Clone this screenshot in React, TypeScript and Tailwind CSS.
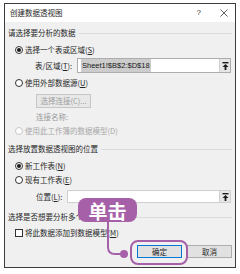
import React from 'react';

const cjk = { fontFamily: '"Noto Sans CJK SC", "Liberation Sans", sans-serif' };

function Radio({ checked = false, disabled = false }: { checked?: boolean; disabled?: boolean }) {
  return (
    <span
      className={`flex items-center justify-center w-[8px] h-[8px] rounded-full border bg-white ${
        disabled ? 'border-[#c8c8c8]' : 'border-[#333333]'
      }`}
    >
      {checked && <span className="w-[4px] h-[4px] rounded-full bg-[#1a1a1a]" />}
    </span>
  );
}

function Heading({ text }: { text: string }) {
  return (
    <div className="flex items-center h-[22px] shrink-0">
      <span className="text-[#262626] whitespace-nowrap">{text}</span>
      <span className="flex-1 h-px bg-[#dcdcdc] ml-[3px]" />
    </div>
  );
}

function UploadIcon() {
  return (
    <svg width="7" height="8" viewBox="0 0 7 8">
      <rect x="0.5" y="0" width="6" height="1.4" fill="#1a1a1a" />
      <path d="M3.5 2 L6.5 5 H4.4 V8 H2.6 V5 H0.5 Z" fill="#1a1a1a" />
    </svg>
  );
}

export default function App() {
  return (
    <div className="relative w-[240px] h-[274px] bg-white overflow-hidden pt-[3px] pl-[4px] text-[7.5px] leading-none text-[#262626]" style={cjk}>
      {/* dialog */}
      <div className="w-[232px] h-[265px] border border-[#3c3c3c] flex flex-col">
        <div className="h-[18px] bg-white flex items-center pl-[5px] pr-[7px] shrink-0">
          <span>创建数据透视图</span>
          <span className="ml-auto text-[#333] text-[8px]" style={{ fontFamily: '"Liberation Sans", sans-serif' }}>?</span>
          <svg className="ml-[19px]" width="8" height="8" viewBox="0 0 8 8">
            <path d="M0.5 0.5 L7.5 7.5 M7.5 0.5 L0.5 7.5" stroke="#333" strokeWidth="0.8" />
          </svg>
        </div>

        <div className="flex-1 bg-[#f0f0f0] flex flex-col pl-[3px] pr-[3px]">
          <Heading text="请选择要分析的数据" />

          <div className="flex items-center gap-[2px] h-[12px] pl-[7px] shrink-0">
            <Radio checked />
            <span>选择一个表或区域(<u>S</u>)</span>
          </div>

          <div className="flex items-center h-[19px] pl-[27px] shrink-0">
            <span className="w-[42px] whitespace-nowrap">表/区域(<u>T</u>):</span>
            <div className="w-[154px] h-[15px] bg-white border border-[#adadad] flex items-center">
              <span className="ml-[3px] bg-[#cccccc] text-[#1a1a1a] px-px py-[3px]" style={{ fontFamily: '"Liberation Sans", sans-serif' }}>
                Sheet1!$B$2:$D$18
              </span>
              <span className="ml-auto w-[11px] h-full bg-[#e6e6e6] border-l border-[#d0d0d0] flex items-center justify-center">
                <UploadIcon />
              </span>
            </div>
          </div>

          <div className="flex items-center gap-[2px] h-[16px] pl-[7px] shrink-0">
            <Radio />
            <span>使用外部数据源(<u>U</u>)</span>
          </div>

          <div className="flex items-center h-[20px] pl-[28px] shrink-0">
            <div className="w-[55px] h-[14px] bg-[#e8e8e8] border border-[#c6c6c6] flex items-center justify-center text-[#a0a0a0]">
              选择连接(C)...
            </div>
          </div>

          <div className="flex items-center h-[12px] pl-[28px] shrink-0 text-[#9a9a9a]">连接名称:</div>

          <div className="flex items-center gap-[2px] h-[16px] pl-[7px] shrink-0">
            <Radio disabled />
            <span className="text-[#a8a8a8]">使用此工作簿的数据模型(D)</span>
          </div>

          <div className="h-[20px] shrink-0 flex flex-col justify-center">
            <div className="flex items-center">
              <span className="whitespace-nowrap">选择放置数据透视图的位置</span>
              <span className="flex-1 h-px bg-[#dcdcdc] ml-[3px]" />
            </div>
          </div>

          <div className="flex items-center gap-[2px] h-[14px] pl-[7px] shrink-0">
            <Radio checked />
            <span>新工作表(<u>N</u>)</span>
          </div>

          <div className="flex items-center gap-[2px] h-[14px] pl-[7px] shrink-0">
            <Radio />
            <span>现有工作表(<u>E</u>)</span>
          </div>

          <div className="flex items-center h-[19px] pl-[28px] shrink-0">
            <span className="w-[31px] whitespace-nowrap">位置(<u>L</u>):</span>
            <div className="w-[164px] h-[13px] bg-white border border-[#cfcfcf] flex items-center">
              <span className="ml-auto w-[11px] h-full bg-[#e6e6e6] border-l border-[#d0d0d0] flex items-center justify-center">
                <UploadIcon />
              </span>
            </div>
          </div>

          <Heading text="选择是否想要分析多个表" />

          <div className="flex items-center gap-[2px] h-[10px] pl-[7px] shrink-0">
            <span className="w-[8px] h-[8px] border border-[#333] bg-white" />
            <span>将此数据添加到数据模型(<u>M</u>)</span>
          </div>

          <div className="flex items-center justify-end gap-[5px] h-[27px] shrink-0">
            <div className="w-[45px] h-[13px] bg-[#e1e1e1] border border-[#0078d7] flex items-center justify-center">
              确定
            </div>
            <div className="w-[45px] h-[13px] bg-[#e1e1e1] border border-[#adadad] flex items-center justify-center">
              取消
            </div>
          </div>
        </div>
      </div>

      {/* callout overlay */}
      <svg className="absolute left-0 top-0 pointer-events-none" width="240" height="274" viewBox="0 0 240 274">
        <path d="M108 220 V247 Q108 254 115 254 H124" fill="none" stroke="#a660a8" strokeWidth="2" />
        <circle cx="124" cy="254" r="4" fill="#a660a8" />
      </svg>
      <div className="absolute left-[130px] top-[240px] w-[58px] h-[25px] rounded-[8px] border-2 border-[#a660a8]" />
      <div className="absolute left-[78px] top-[198px] w-[59px] h-[24px] rounded-[8px] bg-[#a660a8] flex items-center justify-center text-white text-[19px] font-bold leading-none">
        单击
      </div>
    </div>
  );
}
